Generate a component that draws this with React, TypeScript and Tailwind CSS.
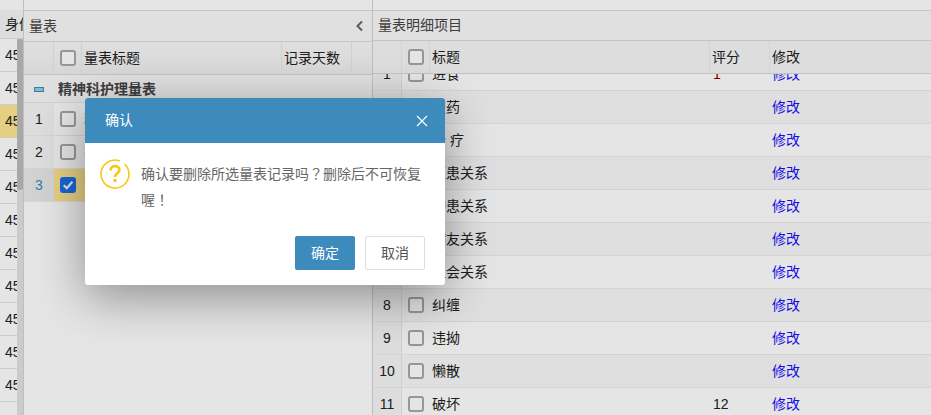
import React from "react";

const font = { fontFamily: '"Liberation Sans","Noto Sans CJK SC",sans-serif' };

function Box({ checked }: { checked?: boolean }) {
  if (checked) {
    return (
      <span className="flex h-[16px] w-[16px] items-center justify-center rounded-[3px] bg-[#1a72ee]">
        <svg width="12" height="12" viewBox="0 0 12 12" fill="none">
          <path d="M1.8 6.2 L4.8 9.2 L10.4 2.8" stroke="#fff" strokeWidth="2.2" />
        </svg>
      </span>
    );
  }
  return <span className="block h-[16px] w-[16px] rounded-[3px] border-2 border-[#a8a8a8] bg-white" />;
}

const rightRows = [
  ["1", "进食", "1"],
  ["2", "服药", ""],
  ["3", "治 疗", ""],
  ["4", "医患关系", ""],
  ["5", "护患关系", ""],
  ["6", "病友关系", ""],
  ["7", "社会关系", ""],
  ["8", "纠缠", ""],
  ["9", "违拗", ""],
  ["10", "懒散", ""],
  ["11", "破坏", "12"],
];

function App() {
  return (
    <div className="relative h-[415px] w-[931px] overflow-hidden bg-white text-[14px] text-[#222]" style={font}>
      <div className="flex h-full">
        {/* far left column */}
        <div className="relative h-full w-[24px] shrink-0 overflow-hidden border-r border-[#d4d4d4]">
          <div className="h-[10px]" />
          <div className="flex h-[29px] items-center overflow-hidden whitespace-nowrap border-b border-[#e4e4e4] bg-[#f6f6f6] pl-[5px]">身份</div>
          {[0, 1, 2, 3, 4, 5, 6, 7, 8, 9, 10].map((i) => (
            <div key={i} className={`flex h-[33px] items-center border-b border-[#e4e4e4] pl-[5px] ${i === 2 ? "bg-[#ffe791]" : "bg-white"}`}>
              45
            </div>
          ))}
          <div className="absolute bottom-0 right-0 top-[39px] w-[6px] bg-[#e2e2e2]">
            <div className="h-[151px] w-full rounded-[2px] bg-[#bbbbbb]" />
          </div>
        </div>

        {/* centre */}
        <div className="flex h-full w-[348px] shrink-0 flex-col">
          <div className="h-[10px] shrink-0" />
          <div className="flex h-[32px] shrink-0 items-center justify-between border-y border-[#dcdcdc] bg-[#fafafa] pl-[5px] pr-[8px] text-[#444]">
            <span>量表</span>
            <svg width="9" height="12" viewBox="0 0 9 12" fill="none">
              <path d="M7 1.5 L2.5 6 L7 10.5" stroke="#666" strokeWidth="2" />
            </svg>
          </div>
          <div className="flex h-[33px] shrink-0 items-center border-b border-[#dcdcdc] bg-gradient-to-b from-[#f9f9f9] to-[#f0f0f0]">
            <div className="h-full w-[30px] border-r border-[#e8e8e8]" />
            <div className="flex h-full w-[28px] items-center justify-center border-r border-[#e8e8e8]"><Box /></div>
            <div className="flex h-full w-[200px] items-center border-r border-[#e8e8e8] pl-[2px]">量表标题</div>
            <div className="flex h-full w-[70px] items-center border-r border-[#e8e8e8] pl-[2px]">记录天数</div>
          </div>
          <div className="flex h-[28px] shrink-0 items-center border-b border-[#e8e8e8] bg-[#fafafa] pt-[2px] text-[14px] font-bold text-[#444]">
            <span className="ml-[10px] mr-[14px] block h-[5px] w-[10px] border border-[#3c8dbc] bg-[#9fcbe6]" />
            精神科护理量表
          </div>
          {[
            ["1", "精神症状评定", false],
            ["2", "护士观察量表", false],
            ["3", "住院患者量表", true],
          ].map(([n, t, sel]) => (
            <div key={n as string} className="flex h-[33px] shrink-0 items-center border-b border-[#eeeeee]">
              <div className={`flex h-full w-[30px] items-center justify-center ${sel ? "bg-[#eaeaea] text-[#3c8dbc]" : "bg-[#f7f7f7]"}`}>{n}</div>
              <div className={`flex h-full flex-1 items-center ${sel ? "bg-[#ffe791]" : "bg-white"}`}>
                <div className="flex w-[28px] justify-center"><Box checked={sel as boolean} /></div>
                <span className="pl-[2px] text-[#c77700]">{t}</span>
              </div>
            </div>
          ))}
          <div className="flex-1 bg-white" />
        </div>

        {/* right */}
        <div className="flex h-full flex-1 flex-col border-l border-[#d4d4d4]">
          <div className="h-[10px] shrink-0" />
          <div className="flex h-[31px] shrink-0 items-center border-y border-[#dcdcdc] bg-[#fafafa] pl-[5px] text-[#444]">量表明细项目</div>
          <div className="flex h-[33px] shrink-0 items-center border-b border-[#d8d8d8] bg-[#f6f6f6]">
            <div className="h-full w-[29px] border-r border-[#ebebeb]" />
            <div className="flex h-full w-[28px] items-center justify-center border-r border-[#ebebeb]"><Box /></div>
            <div className="flex h-full w-[280px] items-center border-r border-[#ebebeb] pl-[2px]">标题</div>
            <div className="flex h-full w-[60px] items-center border-r border-[#ebebeb] pl-[2px]">评分</div>
            <div className="pl-[2px]">修改</div>
          </div>
          <div className="min-h-0 flex-1 overflow-hidden">
            <div className="-mt-[16px]">
              {rightRows.map(([n, t, s], i) => (
                <div key={n} className={`flex h-[33px] items-center border-b border-[#ececec] ${i % 2 ? "bg-[#f9f9f9]" : "bg-white"}`}>
                  <div className="flex h-full w-[29px] items-center justify-center border-r border-[#e8e8e8] bg-[#f7f7f7]">{n}</div>
                  <div className="flex h-full w-[28px] items-center justify-center"><Box /></div>
                  <div className="w-[280px] pl-[2px]">{t}</div>
                  <div className={`w-[60px] pl-[3px] ${s === "1" ? "text-[#8b0000]" : ""}`}>{s}</div>
                  <div className="pl-[2px] text-[#1a0dff]">修改</div>
                </div>
              ))}
            </div>
          </div>
        </div>
      </div>

      {/* modal mask */}
      <div className="absolute inset-0 bg-black/10" />

      {/* dialog */}
      <div className="absolute left-[85px] top-[98px] flex h-[187px] w-[360px] flex-col overflow-hidden rounded-[3px] bg-white shadow-[0_12px_48px_rgba(0,0,0,0.38)]">
        <div className="flex h-[45px] shrink-0 items-center justify-between bg-[#3c8bbc] pl-[20px] pr-[17px] text-white">
          <span>确认</span>
          <svg width="12" height="12" viewBox="0 0 12 12" fill="none">
            <path d="M1 1 L11 11 M11 1 L1 11" stroke="#fff" strokeWidth="1.2" />
          </svg>
        </div>
        <div className="flex flex-1 items-start pl-[15px] pr-[20px] pt-[16px]">
          <svg width="30" height="30" viewBox="0 0 30 30" fill="none" className="shrink-0">
            <path d="M20 2 A14 14 0 1 0 29 15 A14 14 0 0 0 24.5 5" stroke="#f8c613" strokeWidth="1.6" />
            <path d="M10.5 11.5 C10.5 5.5 19.5 6 19.5 11 C19.5 14 15 14.5 15 18" stroke="#f8c613" strokeWidth="2.6" />
            <rect x="13.5" y="20" width="3" height="3" fill="#f8c613" />
          </svg>
          <p className="ml-[11px] mt-[2px] text-[14px] leading-[25px] text-[#666]">
            确认要删除所选量表记录吗<span className="font-['Noto_Sans_CJK_TC']">？</span>删除后不可恢复喔<span className="font-['Noto_Sans_CJK_TC']">！</span>
          </p>
        </div>
        <div className="flex shrink-0 justify-end gap-[10px] pb-[15px] pr-[20px]">
          <button className="h-[34px] w-[60px] rounded-[2px] bg-[#3c8bbc] text-white">确定</button>
          <button className="h-[34px] w-[60px] rounded-[2px] border border-[#ddd] bg-white text-[#555]">取消</button>
        </div>
      </div>
    </div>
  );
}

export default App;
